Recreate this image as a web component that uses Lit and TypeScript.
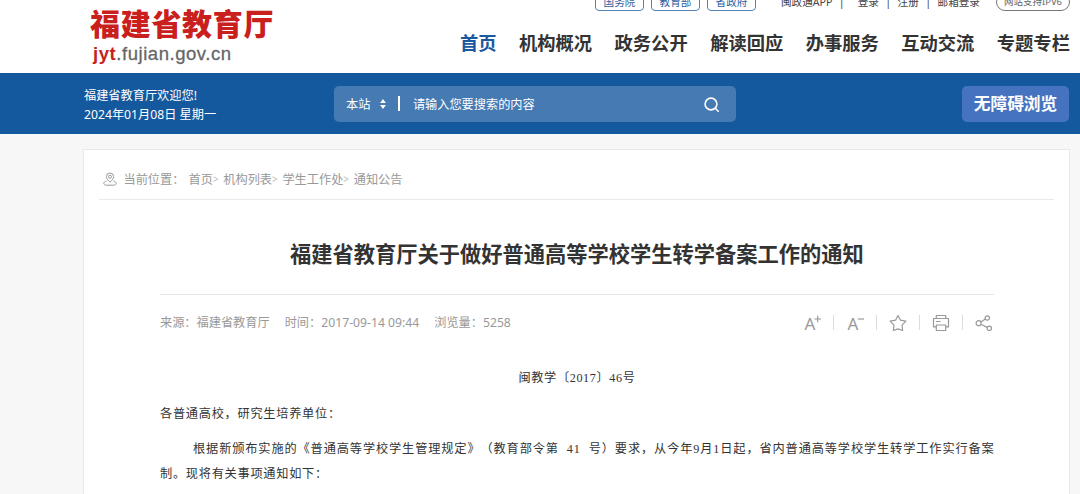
import { css, html, LitElement, svg } from 'lit';
import { customElement, property } from 'lit/decorators.js';

const ICONS = {
    pin: svg`
        <path d="M7 10.2C4.6 8 3.4 6.4 3.4 4.6a3.6 3.6 0 0 1 7.2 0c0 1.8-1.2 3.4-3.6 5.6z" />
        <circle cx="7" cy="4.7" r="1.5" />
        <path d="M3.6 9C1.800 9.500.8 10.300.8 11.300c0 1.200 1 1.900 2.400 1.900h7.600c1.400 0 2.400-.7 2.400-1.900 0-1-1-1.800-2.800-2.300" />
    `,
    search: svg`
        <circle cx="7" cy="7" r="5.900" />
        <path d="m11.300 11.300 3.400 3.400" />
    `,
    star: svg`
        <path d="m9 1.500 2.500 4.700 5.400 1-3.800 3.900.5 5.400-4.600-1.600-4.600 1.600.5-5.400-3.800-3.900 5.400-1z" />
    `,
    printer: svg`
        <path d="M4.300 4.500V1.500h9.400v3M4.300 12.800H1.500V4.500h15v8.300h-2.800" />
        <path d="M4.300 11h9.400v5.500H4.300zM4 7.500h4.500" />
    `,
    share: svg`
        <circle cx="3.600" cy="9.200" r="2.500" />
        <circle cx="12.300" cy="4" r="2.200" />
        <circle cx="14.300" cy="14.300" r="2.200" />
        <path d="m5.800 8 4.600-2.900M5.900 10.300l6.300 3.100" />
    `,
    larger: svg`
        <text x="0.500" y="16.200">A</text>
        <path d="M10.400 5h6.600M13.700 1.700v6.600" />
    `,
    smaller: svg`
        <text x="0.500" y="16.200">A</text>
        <path d="M10.800 5H17" />
    `,
};

@customElement('gov-icon')
export class GovIcon extends LitElement {
    static styles = css`
        :host {
            display: block;
            flex: none;
        }
        svg {
            display: block;
            width: 100%;
            height: 100%;
            fill: none;
            stroke: currentColor;
            stroke-width: var(--icon-stroke, 1.2);
            stroke-linejoin: round;
        }
        text {
            fill: currentColor;
            stroke: none;
            font-family: 'Noto Sans', sans-serif;
            font-size: 17px;
        }
    `;

    @property({ type: String })
    name: keyof typeof ICONS = 'star';

    @property({ type: Number })
    box = 18;

    render() {
        return html`<svg viewBox="0 0 ${this.box} ${this.box}">${ICONS[this.name]}</svg>`;
    }
}

@customElement('site-header')
export class SiteHeader extends LitElement {
    static styles = css`
        :host {
            display: block;
        }
        .masthead {
            display: flex;
            justify-content: space-between;
            height: 73px;
            padding: 0 10px 0 90px;
            background: #fff;
            overflow: hidden;
        }
        .logo {
            padding-top: 7px;
            white-space: nowrap;
        }
        .name {
            color: #c9201d;
            font-size: 30px;
            font-weight: 900;
            line-height: 34px;
            letter-spacing: 0.7px;
        }
        .domain {
            padding: 3px 0 0 3px;
            color: #666;
            font-family: 'Liberation Sans', sans-serif;
            font-size: 18.5px;
            line-height: 20px;
            letter-spacing: 0.55px;
            -webkit-text-stroke: 0.3px;
        }
        .domain b {
            color: #c9201d;
            font-weight: bold;
            -webkit-text-stroke: 0;
        }
        .right {
            width: 610px;
        }
        .top {
            display: flex;
            align-items: flex-end;
            height: 11px;
            padding-left: 135px;
            color: #444;
            font-size: 10.6px;
            white-space: nowrap;
        }
        .tag {
            box-sizing: border-box;
            width: 49px;
            height: 18px;
            margin-right: 7px;
            border: 1px solid #5582b4;
            border-radius: 4px;
            color: #2c609d;
            line-height: 16px;
            text-align: center;
        }
        .links {
            display: flex;
            justify-content: space-between;
            width: 199px;
            margin-left: 18px;
            line-height: 18px;
        }
        .ipv6 {
            box-sizing: border-box;
            width: 74px;
            height: 18px;
            margin-left: auto;
            border: 1px solid #777;
            border-radius: 9px;
            color: #666;
            font-size: 9.5px;
            line-height: 16px;
            text-align: center;
        }
        .nav {
            display: flex;
            justify-content: space-between;
            padding-top: 17px;
            color: #333;
            font-size: 18.3px;
            font-weight: bold;
            line-height: 30px;
            white-space: nowrap;
        }
        .nav .active {
            color: #1a599f;
        }
        .bar {
            display: flex;
            align-items: center;
            height: 61px;
            padding: 0 10px 0 84px;
            background: #14589d;
            color: #fff;
            font-size: 12.2px;
            white-space: nowrap;
        }
        .welcome {
            width: 250px;
            padding-top: 2px;
            line-height: 19px;
        }
        .search {
            display: flex;
            align-items: center;
            box-sizing: border-box;
            width: 402px;
            height: 36px;
            padding: 0 16px 0 12px;
            border-radius: 5px;
            background: #457ab3;
        }
        .arrows {
            display: grid;
            gap: 2px;
            margin: 1px 12px 0 10px;
        }
        .up,
        .down {
            border: 3.5px solid transparent;
        }
        .up {
            border-top: 0;
            border-bottom: 4px solid #fff;
        }
        .down {
            border-bottom: 0;
            border-top: 4px solid #fff;
        }
        .divider {
            width: 1.5px;
            height: 15px;
            margin-right: 13px;
            background: #fff;
        }
        .search gov-icon {
            width: 16px;
            height: 16px;
            margin: 2px 0 0 auto;
            --icon-stroke: 1.6;
        }
        .access {
            width: 107px;
            margin-right: 1px;
            margin-left: auto;
            border-radius: 5px;
            background: #4673c0;
            font-size: 16.7px;
            font-weight: bold;
            line-height: 36px;
            text-align: center;
        }
    `;

    private _nav = ['首页', '机构概况', '政务公开', '解读回应', '办事服务', '互动交流', '专题专栏'];

    render() {
        return html`
            <div class="masthead">
                <div class="logo">
                    <div class="name">福建省教育厅</div>
                    <div class="domain"><b>jyt</b>.fujian.gov.cn</div>
                </div>
                <div class="right">
                    <div class="top">
                        ${['国务院', '教育部', '省政府'].map((tag) => html`<span class="tag">${tag}</span>`)}
                        <div class="links">
                            <span>闽政通APP</span><span>|</span><span></span><span>登录</span><span>|</span
                            ><span>注册</span><span>|</span><span>邮箱登录</span>
                        </div>
                        <span class="ipv6">网站支持IPV6</span>
                    </div>
                    <nav class="nav">
                        ${this._nav.map((item, i) => html`<span class="${i === 0 ? 'active' : ''}">${item}</span>`)}
                    </nav>
                </div>
            </div>
            <div class="bar">
                <div class="welcome">
                    <div>福建省教育厅欢迎您!</div>
                    <div>2024年01月08日 星期一</div>
                </div>
                <div class="search">
                    <span>本站</span>
                    <span class="arrows"><i class="up"></i><i class="down"></i></span>
                    <span class="divider"></span>
                    <span>请输入您要搜索的内容</span>
                    <gov-icon name="search" box="16"></gov-icon>
                </div>
                <div class="access">无障碍浏览</div>
            </div>
        `;
    }
}

@customElement('notice-article')
export class NoticeArticle extends LitElement {
    static styles = css`
        :host {
            display: block;
            box-sizing: border-box;
            height: 400px;
            padding: 0 15px;
            border: 1px solid #e9e9e9;
            background: #fff;
            color: #999;
            font-size: 12.2px;
            white-space: nowrap;
        }
        .crumbs {
            display: flex;
            align-items: center;
            height: 50px;
            padding: 9px 0 0 4px;
            box-sizing: border-box;
            border-bottom: 1.5px solid #eaeaea;
        }
        .crumbs gov-icon {
            width: 14px;
            height: 14px;
            margin-right: 6.5px;
            --icon-stroke: 1;
        }
        .label {
            width: 65px;
        }
        .sep {
            width: 10.4px;
            color: #bbb;
            font-size: 10px;
        }
        .content {
            padding: 0 60px 0 61px;
        }
        .title {
            margin: 0;
            padding: 39px 0 25px;
            border-bottom: 1px solid #e6e6e6;
            color: #333;
            font-size: 21.25px;
            font-weight: bold;
            line-height: 30px;
            text-align: center;
        }
        .meta {
            display: flex;
            align-items: center;
            height: 53px;
        }
        .meta span {
            margin-right: 15px;
        }
        .tools {
            display: flex;
            align-items: center;
            margin: 2px 1px 0 auto;
        }
        .tools gov-icon {
            width: 18px;
            height: 18px;
        }
        .tools gov-icon + gov-icon {
            margin-left: 11.3px;
            padding-left: 13.5px;
            background: linear-gradient(#ddd, #ddd) left center / 1px 15px no-repeat;
        }
        .body {
            color: #333;
            font-family: 'Liberation Serif', 'Noto Sans CJK SC', serif;
            letter-spacing: 0.73px;
            line-height: 25px;
            text-spacing-trim: space-all;
        }
        .body p {
            margin: 0 0 10.5px;
        }
        .body .number {
            padding-top: 18px;
            text-align: center;
            letter-spacing: 0.6px;
        }
        .line {
            display: block;
            white-space: pre;
        }
        .first {
            padding-left: 33px;
            letter-spacing: 0.88px;
            word-spacing: 4px;
        }
    `;

    private _path = ['首页', '机构列表', '学生工作处', '通知公告'];

    private _tools = ['larger', 'smaller', 'star', 'printer', 'share'];

    render() {
        return html`
            <div class="crumbs">
                <gov-icon name="pin" box="14"></gov-icon>
                <span class="label">当前位置：</span>
                ${this._path.map(
                    (item, i) => html`${i > 0 ? html`<span class="sep">&gt;</span>` : ''}<span>${item}</span>`
                )}
            </div>
            <div class="content">
                <h1 class="title">福建省教育厅关于做好普通高等学校学生转学备案工作的通知</h1>
                <div class="meta">
                    <span>来源：福建省教育厅</span>
                    <span>时间：2017-09-14 09:44</span>
                    <span>浏览量：5258</span>
                    <div class="tools">${this._tools.map((name) => html`<gov-icon name="${name}"></gov-icon>`)}</div>
                </div>
                <div class="body">
                    <p class="number">闽教学〔2017〕46号</p>
                    <p>各普通高校，研究生培养单位：</p>
                    <p>
                        <span class="line first"
                            >根据新颁布实施的《普通高等学校学生管理规定》（教育部令第 41 号）要求，从今年9月1日起，省内普通高等学校学生转学工作实行备案</span
                        >
                        <span class="line">制。现将有关事项通知如下：</span>
                    </p>
                </div>
            </div>
        `;
    }
}

@customElement('app-root')
export class AppRoot extends LitElement {
    static styles = css`
        :host {
            display: block;
            height: 494px;
            overflow: hidden;
            background: #f7f7f7;
            font-family: 'Noto Sans', 'Noto Sans CJK SC', sans-serif;
        }
        notice-article {
            margin: 15px 10px 0 83px;
        }
    `;

    render() {
        return html`
            <site-header lang="zh-CN"></site-header>
            <notice-article lang="zh-CN"></notice-article>
        `;
    }
}

declare global {
    interface HTMLElementTagNameMap {
        'gov-icon': GovIcon;
        'site-header': SiteHeader;
        'notice-article': NoticeArticle;
        'app-root': AppRoot;
    }
}
